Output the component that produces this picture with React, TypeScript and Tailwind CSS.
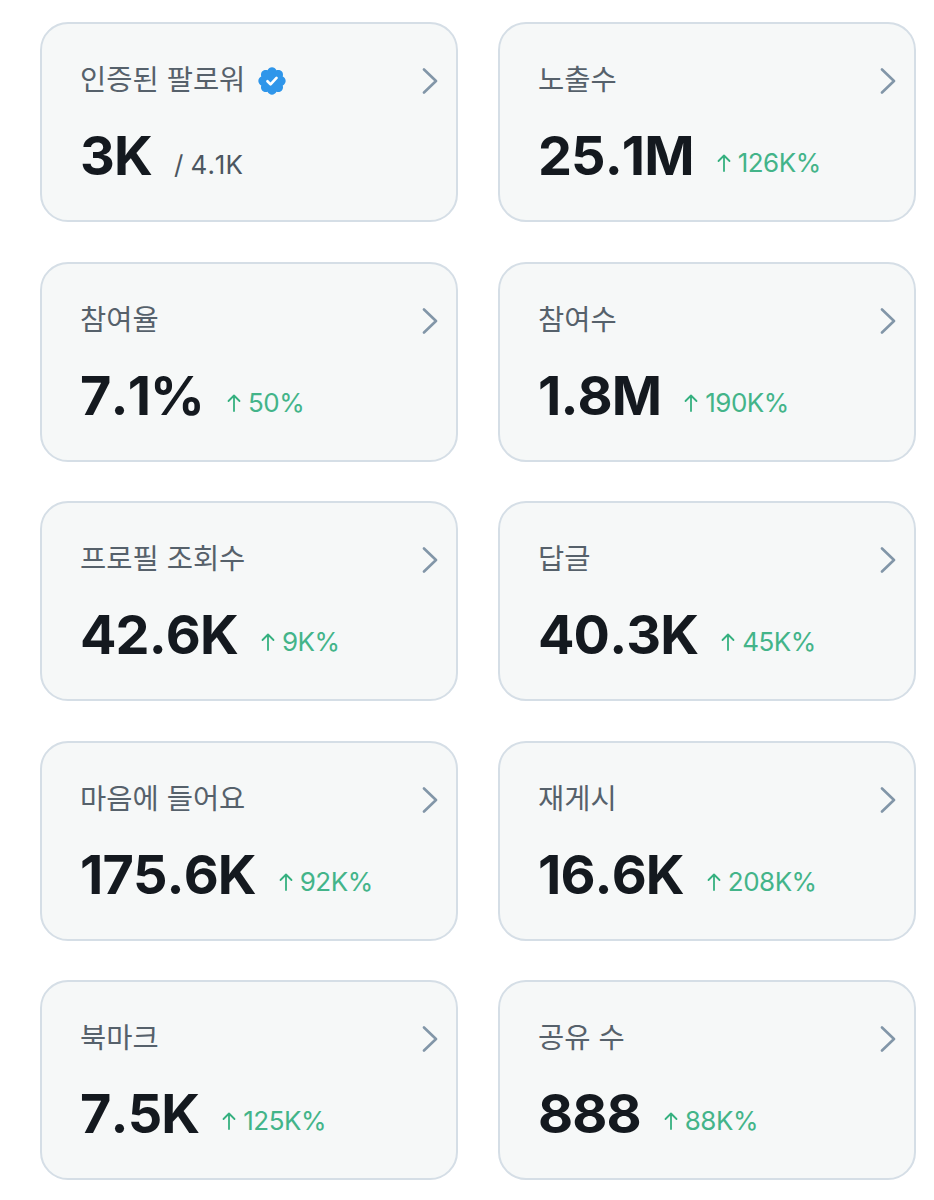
type Metric = {
  label: string
  value: string
  delta?: string
  total?: string
  verified?: boolean
}

const metrics: Metric[] = [
  { label: '인증된 팔로워', value: '3K', total: '/ 4.1K', verified: true },
  { label: '노출수', value: '25.1M', delta: '126K%' },
  { label: '참여율', value: '7.1%', delta: '50%' },
  { label: '참여수', value: '1.8M', delta: '190K%' },
  { label: '프로필 조회수', value: '42.6K', delta: '9K%' },
  { label: '답글', value: '40.3K', delta: '45K%' },
  { label: '마음에 들어요', value: '175.6K', delta: '92K%' },
  { label: '재게시', value: '16.6K', delta: '208K%' },
  { label: '북마크', value: '7.5K', delta: '125K%' },
  { label: '공유 수', value: '888', delta: '88K%' },
]

function VerifiedBadge() {
  return (
    <svg viewBox="0 0 24 24" className="ml-[11px] h-[32px] w-[32px]" aria-hidden="true">
      <path
        fill="#2f96ea"
        d="M22.25 12c0-1.43-.88-2.67-2.19-3.34.46-1.39.2-2.9-.81-3.91s-2.52-1.27-3.91-.81C14.67 2.63 13.43 1.75 12 1.75s-2.67.88-3.33 2.19c-1.4-.46-2.91-.2-3.92.81s-1.26 2.52-.8 3.91C2.63 9.33 1.75 10.57 1.75 12s.88 2.67 2.2 3.34c-.46 1.39-.21 2.9.8 3.91s2.52 1.26 3.91.81c.67 1.31 1.91 2.19 3.34 2.19s2.68-.88 3.33-2.19c1.4.45 2.91.2 3.92-.81s1.27-2.52.81-3.91c1.31-.67 2.19-1.91 2.19-3.34z"
      />
      <path
        fill="none"
        stroke="#fff"
        strokeWidth="2"
        strokeLinecap="round"
        strokeLinejoin="round"
        d="M8.6 12.2l2.3 2.3 4.5-4.8"
      />
    </svg>
  )
}

function Chevron() {
  return (
    <svg viewBox="0 0 16 26" className="h-[26px] w-[16px]" aria-hidden="true">
      <path
        fill="none"
        stroke="#8296a8"
        strokeWidth="2.6"
        strokeLinecap="round"
        strokeLinejoin="round"
        d="M2 1.5l12 11.5L2 24.5"
      />
    </svg>
  )
}

function UpArrow() {
  return (
    <svg viewBox="0 0 14 18" className="mr-[7px] h-[18px] w-[14px]" aria-hidden="true">
      <path
        fill="none"
        stroke="#35b07f"
        strokeWidth="1.8"
        strokeLinecap="round"
        strokeLinejoin="round"
        d="M7 17V1.5M1.5 7L7 1.5 12.5 7"
      />
    </svg>
  )
}

function MetricCard({ metric }: { metric: Metric }) {
  return (
    <div className="flex h-[200px] flex-col rounded-[28px] border-2 border-[#d5dee6] bg-[#f6f8f8] pl-[38px] pr-[18px] pt-[37px]">
      <div className="flex h-[40px] items-center justify-between">
        <div className="flex items-center">
          <span className="-mt-[2px] text-[28.5px] leading-[40px] text-[#56616b]">{metric.label}</span>
          {metric.verified && <VerifiedBadge />}
        </div>
        <Chevron />
      </div>
      <div className="mt-[24px] flex items-end [font-kerning:none]">
        <span className="text-[54px] font-bold leading-[62px] tracking-[-0.9px] text-[#14191f]">{metric.value}</span>
        {metric.total && (
          <span className="mb-[4px] ml-[22px] text-[26px] leading-[36px] text-[#4c5660]">{metric.total}</span>
        )}
        {metric.delta && (
          <span className="mb-[6px] ml-[23px] flex items-center text-[26px] leading-[36px] tracking-[-0.5px] text-[#43b489]">
            <UpArrow />
            {metric.delta}
          </span>
        )}
      </div>
    </div>
  )
}

export default function App() {
  return (
    <div
      className="grid h-[1200px] w-[934px] grid-cols-2 content-start gap-x-[40px] gap-y-[39.5px] bg-white pl-[40px] pr-[18px] pt-[22px]"
      style={{ fontFamily: 'Inter, "Noto Sans CJK KR", sans-serif' }}
    >
      {metrics.map((metric) => (
        <MetricCard key={metric.label} metric={metric} />
      ))}
    </div>
  )
}
